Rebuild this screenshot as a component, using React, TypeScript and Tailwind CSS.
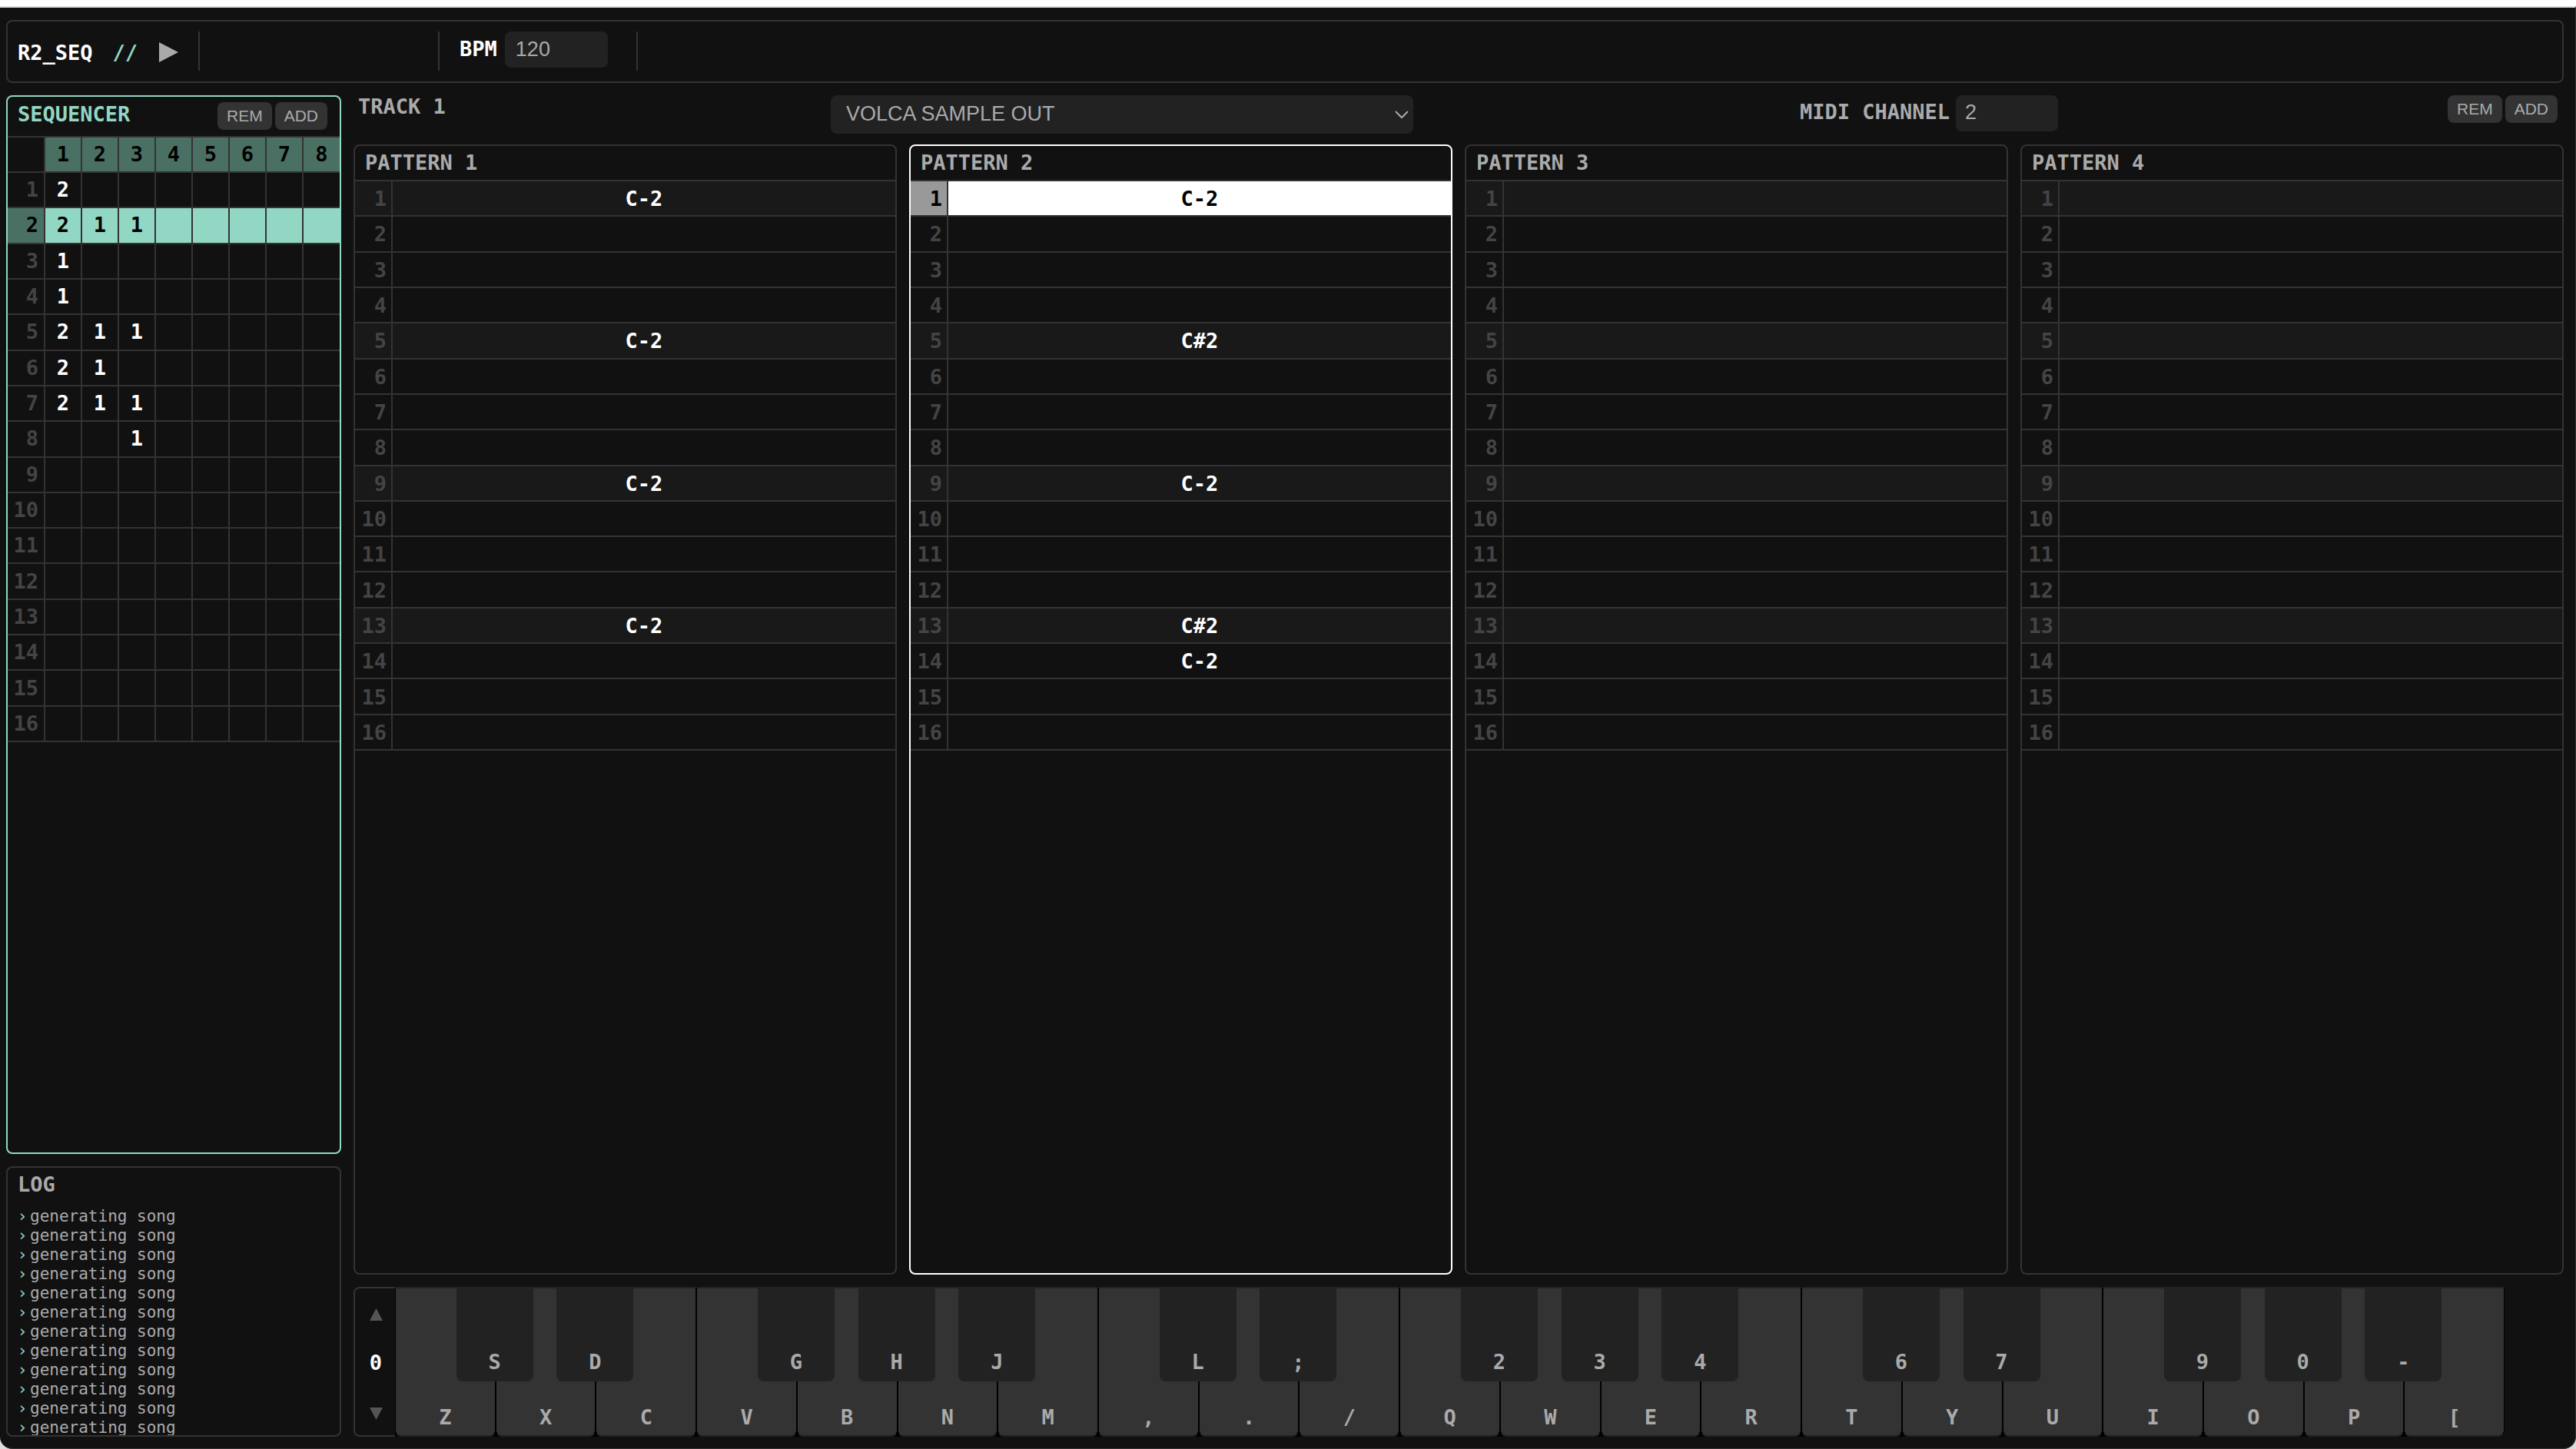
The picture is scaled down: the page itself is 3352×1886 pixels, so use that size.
import { useState } from "react";

const MONO = "font-['DejaVu_Sans_Mono',monospace]";
const SANS = "font-['Liberation_Sans',Arial,sans-serif]";

const sequence: Record<number, (number | null)[]> = {
  1: [2],
  2: [2, 1, 1],
  3: [1],
  4: [1],
  5: [2, 1, 1],
  6: [2, 1],
  7: [2, 1, 1],
  8: [null, null, 1],
};

const patterns: { id: number; notes: Record<number, string> }[] = [
  { id: 1, notes: { 1: "C-2", 5: "C-2", 9: "C-2", 13: "C-2" } },
  { id: 2, notes: { 1: "C-2", 5: "C#2", 9: "C-2", 13: "C#2", 14: "C-2" } },
  { id: 3, notes: {} },
  { id: 4, notes: {} },
];

const logLines = Array.from({ length: 12 }, () => "generating song");

const keys: { white: string; black?: string }[] = [
  { white: "Z", black: "S" },
  { white: "X", black: "D" },
  { white: "C" },
  { white: "V", black: "G" },
  { white: "B", black: "H" },
  { white: "N", black: "J" },
  { white: "M" },
  { white: ",", black: "L" },
  { white: ".", black: ";" },
  { white: "/" },
  { white: "Q", black: "2" },
  { white: "W", black: "3" },
  { white: "E", black: "4" },
  { white: "R" },
  { white: "T", black: "6" },
  { white: "Y", black: "7" },
  { white: "U" },
  { white: "I", black: "9" },
  { white: "O", black: "0" },
  { white: "P", black: "-" },
  { white: "[" },
];

const steps = Array.from({ length: 16 }, (_, i) => i + 1);
const tracks = [1, 2, 3, 4, 5, 6, 7, 8];

function RemAdd({ target }: { target: string }) {
  const style = `rounded-lg bg-[#333] px-3 py-1.5 text-[21px] leading-6 font-normal text-[#aaa] ${SANS}`;
  return (
    <div className="flex gap-1">
      <button className={style} aria-label={`REM ${target}`}>REM</button>
      <button className={style} aria-label={`ADD ${target}`}>ADD</button>
    </div>
  );
}

function Header() {
  const [bpm, setBpm] = useState("120");
  return (
    <header className="flex h-[82px] items-start rounded-lg border-2 border-[#333] pt-[13px] pl-[13px]">
      <h1 className="flex h-[52px] items-center pt-1 text-white">R2_SEQ</h1>
      <span className="ml-[26px] flex h-[52px] items-center pt-1 text-[#92d7c4]">//</span>
      <button aria-label="Play" className="mt-3.5 ml-7">
        <svg width="25" height="26" viewBox="0 0 25 26" fill="#aaa"><path d="M0 0L25 13L0 26Z" /></svg>
      </button>
      <div className="ml-[26px] h-[51px] w-[314px] border-x-2 border-[#333]" />
      <div className="flex h-[51px] w-[258px] items-start border-r-2 border-[#333] pl-[26px]">
        <label htmlFor="bpm" className="pt-[7px] pr-2.5 text-white">BPM</label>
        <input
          id="bpm"
          value={bpm}
          onChange={(e) => setBpm(e.target.value)}
          className={`h-[47px] w-[134px] rounded-lg bg-[#222] px-3.5 font-normal ${SANS}`}
        />
      </div>
    </header>
  );
}

function Sequencer() {
  return (
    <section className="flex min-h-0 flex-1 flex-col overflow-hidden rounded-lg border-2 border-[#92d7c4]">
      <div className="flex h-[51px] shrink-0 items-start justify-between pt-[7px] pr-4 pl-[13px]">
        <h2 className="text-[#92d7c4]">SEQUENCER</h2>
        <RemAdd target="sequence" />
      </div>
      <table className="h-[789px] w-full table-fixed border-collapse border-y-2 border-[#333] text-center">
        <thead>
          <tr className="h-[46px]">
            <td />
            {tracks.map((t) => (
              <th key={t} scope="col" className="border-l-2 border-[#333] bg-[#4a7064] text-black">{t}</th>
            ))}
          </tr>
        </thead>
        <tbody>
          {steps.map((s) => {
            const active = s === 2;
            return (
              <tr key={s} className={active ? "bg-[#92d7c4] text-black" : "text-white"}>
                <th
                  scope="row"
                  className={`border-t-2 border-[#333] pr-[7px] text-right ${active ? "bg-[#4a7064] text-black" : "text-[#444]"}`}
                >
                  {s}
                </th>
                {tracks.map((t) => (
                  <td key={t} className="border-t-2 border-l-2 border-[#333]">{sequence[s]?.[t - 1] ?? ""}</td>
                ))}
              </tr>
            );
          })}
        </tbody>
      </table>
    </section>
  );
}

function Log() {
  return (
    <section className="h-[352px] overflow-hidden rounded-lg border-2 border-[#333] pt-1.5 pl-[13px]">
      <h2>LOG</h2>
      <ul className="mt-[13px] text-[21px] leading-[25px] font-normal">
        {logLines.map((line, i) => (
          <li key={i} className="flex">
            <span className="mr-1 flex w-3 justify-center text-[#92d7c4]">›</span>
            {line}
          </li>
        ))}
      </ul>
    </section>
  );
}

function TrackBar() {
  const [channel, setChannel] = useState("2");
  return (
    <div className="grid h-16 grid-cols-[615fr_1261fr_986fr] items-start pr-2 pl-1.5">
      <h2 className="leading-[30px]">TRACK 1</h2>
      <div className="relative w-[758px]">
        <select
          aria-label="Output"
          className={`h-[50px] w-full appearance-none rounded-lg bg-[#222] px-5 pb-0.5 font-normal ${SANS}`}
        >
          <option>VOLCA SAMPLE OUT</option>
        </select>
        <svg
          className="pointer-events-none absolute top-5 right-1.5"
          width="18" height="11" viewBox="0 0 18 11" fill="none" stroke="#aaa" strokeWidth="2"
        >
          <path d="M1 1L9 9L17 1" />
        </svg>
      </div>
      <div className="flex items-start">
        <label htmlFor="channel" className="pt-1.5 pr-2">MIDI CHANNEL</label>
        <input
          id="channel"
          value={channel}
          onChange={(e) => setChannel(e.target.value)}
          className={`h-[47px] w-[133px] rounded-lg bg-[#222] px-3 pb-0.5 font-normal ${SANS}`}
        />
        <div className="ml-auto"><RemAdd target="pattern" /></div>
      </div>
    </div>
  );
}

function Pattern({ id, notes }: { id: number; notes: Record<number, string> }) {
  const selected = id === 2;
  return (
    <section className={`overflow-hidden rounded-lg border-2 ${selected ? "border-white" : "border-[#333]"}`}>
      <h3 className="h-11 pt-1.5 pl-[13px]">PATTERN {id}</h3>
      <table className="h-[743px] w-full table-fixed border-collapse border-y-2 border-[#333] text-center text-white">
        <colgroup>
          <col className="w-12" />
          <col />
        </colgroup>
        <tbody>
          {steps.map((s) => {
            const active = selected && s === 1;
            const beat = s % 4 === 1;
            return (
              <tr key={s} className={active ? "bg-white text-black" : beat ? "bg-[#191919]" : ""}>
                <th
                  scope="row"
                  className={`border-t-2 border-r-2 border-[#333] pt-0.5 pr-1.5 text-right ${active ? "bg-[#999] text-black" : "text-[#444]"}`}
                >
                  {s}
                </th>
                <td className="border-t-2 border-[#333] pt-0.5">{notes[s] ?? ""}</td>
              </tr>
            );
          })}
        </tbody>
      </table>
    </section>
  );
}

function Keyboard() {
  return (
    <section className="mt-4 mr-[77px] flex h-[195px]">
      <div className="flex w-[54px] shrink-0 flex-col items-center justify-between rounded-l-lg border-2 border-r-0 border-[#333] pt-[26px] pb-5 pl-0.5">
        <button aria-label="Octave up">
          <svg width="17" height="16" viewBox="0 0 17 16" fill="#555"><path d="M8.500 0L17 16H0Z" /></svg>
        </button>
        <span className="pb-1 text-white">0</span>
        <button aria-label="Octave down">
          <svg width="17" height="16" viewBox="0 0 17 16" fill="#555"><path d="M0 0H17L8.500 16Z" /></svg>
        </button>
      </div>
      <div className="flex flex-1 rounded-r-lg bg-black">
        {keys.map(({ white, black }) => (
          <div key={white} className="relative flex-1">
            <button className="flex h-full w-full items-end justify-center rounded-b-lg border border-t-2 border-b-2 border-black border-t-[#222] border-b-[#222] bg-[#333] pb-[7px]">
              {white}
            </button>
            {black && (
              <button className="absolute top-0 -right-[49px] z-10 flex h-[123px] w-[100px] items-end justify-center rounded-b-lg bg-[#222] pb-[9px]">
                {black}
              </button>
            )}
          </div>
        ))}
      </div>
    </section>
  );
}

export default function App() {
  return (
    <div className={`h-screen border-t-8 border-white bg-[#ddd] text-[27px] leading-8 font-bold text-[#aaa] ${MONO}`}>
      <div className="h-full rounded-b-2xl border-t-2 border-r border-b border-t-[#ddd] border-r-[#333] border-b-[#333] bg-[#111]">
        <div className="flex h-full flex-col gap-4 pt-4 pr-[15px] pb-[15px] pl-2">
          <Header />
          <div className="flex min-h-0 flex-1 gap-4">
            <aside className="flex w-[436px] shrink-0 flex-col gap-4">
              <Sequencer />
              <Log />
            </aside>
            <main className="flex min-w-0 flex-1 flex-col">
              <TrackBar />
              <div className="grid min-h-0 flex-1 grid-cols-4 gap-4">
                {patterns.map((p) => (
                  <Pattern key={p.id} {...p} />
                ))}
              </div>
              <Keyboard />
            </main>
          </div>
        </div>
      </div>
    </div>
  );
}
